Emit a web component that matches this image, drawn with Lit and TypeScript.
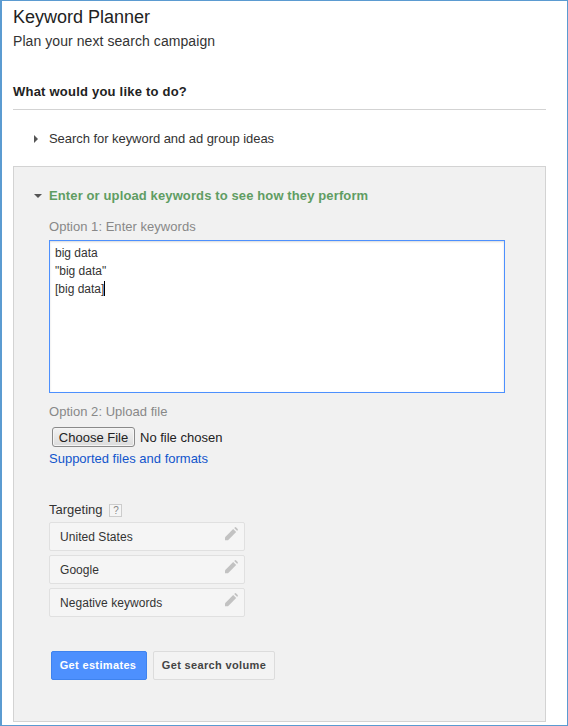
import { LitElement, html, css, svg } from "lit";
import { customElement } from "lit/decorators.js";

const pencil = svg`<svg class="pencil" width="14" height="14" viewBox="0 0 14 14"><path d="M1 10.2 L9.2 2 L12.2 5 L4 13.2 L1 13.2 Z" fill="#c2c2c2"/><path d="M10.2 1 L11 .3 Q11.6 -.1 12.2 .4 L13.7 1.9 Q14.1 2.5 13.7 3 L13.2 4 Z" fill="#c2c2c2"/></svg>`;

@customElement("app-root")
export class AppRoot extends LitElement {
  static styles = css`
    :host { display: block; box-sizing: border-box; width: 568px; height: 726px; border: 1px solid #5b9bd1; border-left-width: 2px; background: #fff; font-family: "Liberation Sans", Arial, sans-serif; color: #222; overflow: hidden; padding: 0 21px 0 11px; }
    .title { font-size: 18px; line-height: 22px; padding-top: 5px; color: #222; }
    .sub { font-size: 14px; line-height: 18px; margin-top: 4px; color: #333; letter-spacing: 0.07px; }
    .q { font-size: 13px; font-weight: bold; line-height: 18px; margin-top: 33px; color: #222; letter-spacing: 0.22px; }
    .rule { height: 1px; background: #d3d3d3; margin-top: 8px; }
    .row { display: flex; align-items: center; gap: 10px; padding-left: 20px; font-size: 13px; line-height: 18px; }
    .row.first { margin-top: 20px; color: #333; letter-spacing: -0.05px; }
    .tri-r { width: 0; height: 0; border-left: 4px solid #555; border-top: 4px solid transparent; border-bottom: 4px solid transparent; margin-left: 1px; margin-right: 1px; }
    .tri-d { width: 0; height: 0; border-top: 4px solid #555; border-left: 4px solid transparent; border-right: 4px solid transparent; margin-right: -3px; }
    .panel { box-sizing: border-box; height: 556px; margin-top: 18px; border: 1px solid #d3d3d3; background: #f1f1f1; padding-top: 20px; }
    .row.open { color: #5f9d63; font-weight: bold; letter-spacing: 0.12px; }
    .body { padding-left: 35px; }
    .label { font-size: 13px; line-height: 18px; color: #888; letter-spacing: 0.03px; }
    .opt1 { margin-top: 13px; }
    .ta { box-sizing: border-box; width: 456px; height: 153px; margin-top: 4px; border: 1px solid #4d90fe; background: #fff; padding: 3px 5px; font-size: 12px; line-height: 18px; color: #333; box-shadow: inset 0 1px 2px rgba(0,0,0,.15); }
    .caret { display: inline-block; width: 1px; height: 15px; background: #000; vertical-align: -3px; }
    .opt2 { margin-top: 10px; }
    .file { display: flex; align-items: center; margin-top: 6px; margin-left: 3px; font-size: 13px; color: #222; }
    .choose { box-sizing: border-box; height: 20px; width: 83px; display: flex; align-items: center; justify-content: center; background: linear-gradient(#f3f3f3, #dcdcdc); border: 1px solid #8a8a8a; border-radius: 3px; margin-right: 5px; box-shadow: inset 0 0 0 1px #f5f5f5; }
    .link { font-size: 13px; line-height: 16px; color: #1155cc; margin-top: 4px; }
    .targeting { display: flex; align-items: center; gap: 7px; font-size: 13px; line-height: 18px; color: #333; margin-top: 34px; }
    .help { box-sizing: border-box; width: 13px; height: 13px; border: 1px solid #ccc; font-size: 10px; line-height: 11px; text-align: center; color: #888; background: #f5f5f5; }
    .tgts { margin-top: -1px; }
    .tgt { box-sizing: border-box; width: 196px; height: 29px; border: 1px solid #e0e0e0; border-radius: 2px; background: #f5f5f5; display: flex; justify-content: space-between; padding: 0 6px 0 10px; font-size: 12px; line-height: 26px; color: #333; margin-top: 4px; letter-spacing: 0.05px; }
    .tgt span { display: block; padding-top: 1px; }
    .pencil { margin-top: 4px; }
    .btns { display: flex; gap: 6px; margin-top: 34px; margin-left: 2px; font-size: 11px; font-weight: bold; letter-spacing: 0.35px; }
    .btn { box-sizing: border-box; height: 29px; display: flex; align-items: center; justify-content: center; border-radius: 2px; padding-bottom: 1px; }
    .primary { width: 96px; background: #4d90fe; border: 1px solid #3f83ee; color: #fff; padding-right: 2px; }
    .secondary { width: 122px; background: #f3f3f3; border: 1px solid #dcdcdc; color: #444; }
  `;

  render() {
    return html`
      <div class="title">Keyword Planner</div>
      <div class="sub">Plan your next search campaign</div>
      <div class="q">What would you like to do?</div>
      <div class="rule"></div>
      <div class="row first"><span class="tri-r"></span><span>Search for keyword and ad group ideas</span></div>
      <div class="panel">
        <div class="row open"><span class="tri-d"></span><span>Enter or upload keywords to see how they perform</span></div>
        <div class="body">
          <div class="label opt1">Option 1: Enter keywords</div>
          <div class="ta">big data<br>"big data"<br>[big data]<span class="caret"></span></div>
          <div class="label opt2">Option 2: Upload file</div>
          <div class="file"><span class="choose">Choose File</span><span>No file chosen</span></div>
          <div class="link">Supported files and formats</div>
          <div class="targeting"><span>Targeting</span><span class="help">?</span></div>
          <div class="tgts">
            ${["United States", "Google", "Negative keywords"].map(
              (t) => html`<div class="tgt"><span>${t}</span>${pencil}</div>`
            )}
          </div>
          <div class="btns">
            <div class="btn primary">Get estimates</div>
            <div class="btn secondary">Get search volume</div>
          </div>
        </div>
      </div>
    `;
  }
}
